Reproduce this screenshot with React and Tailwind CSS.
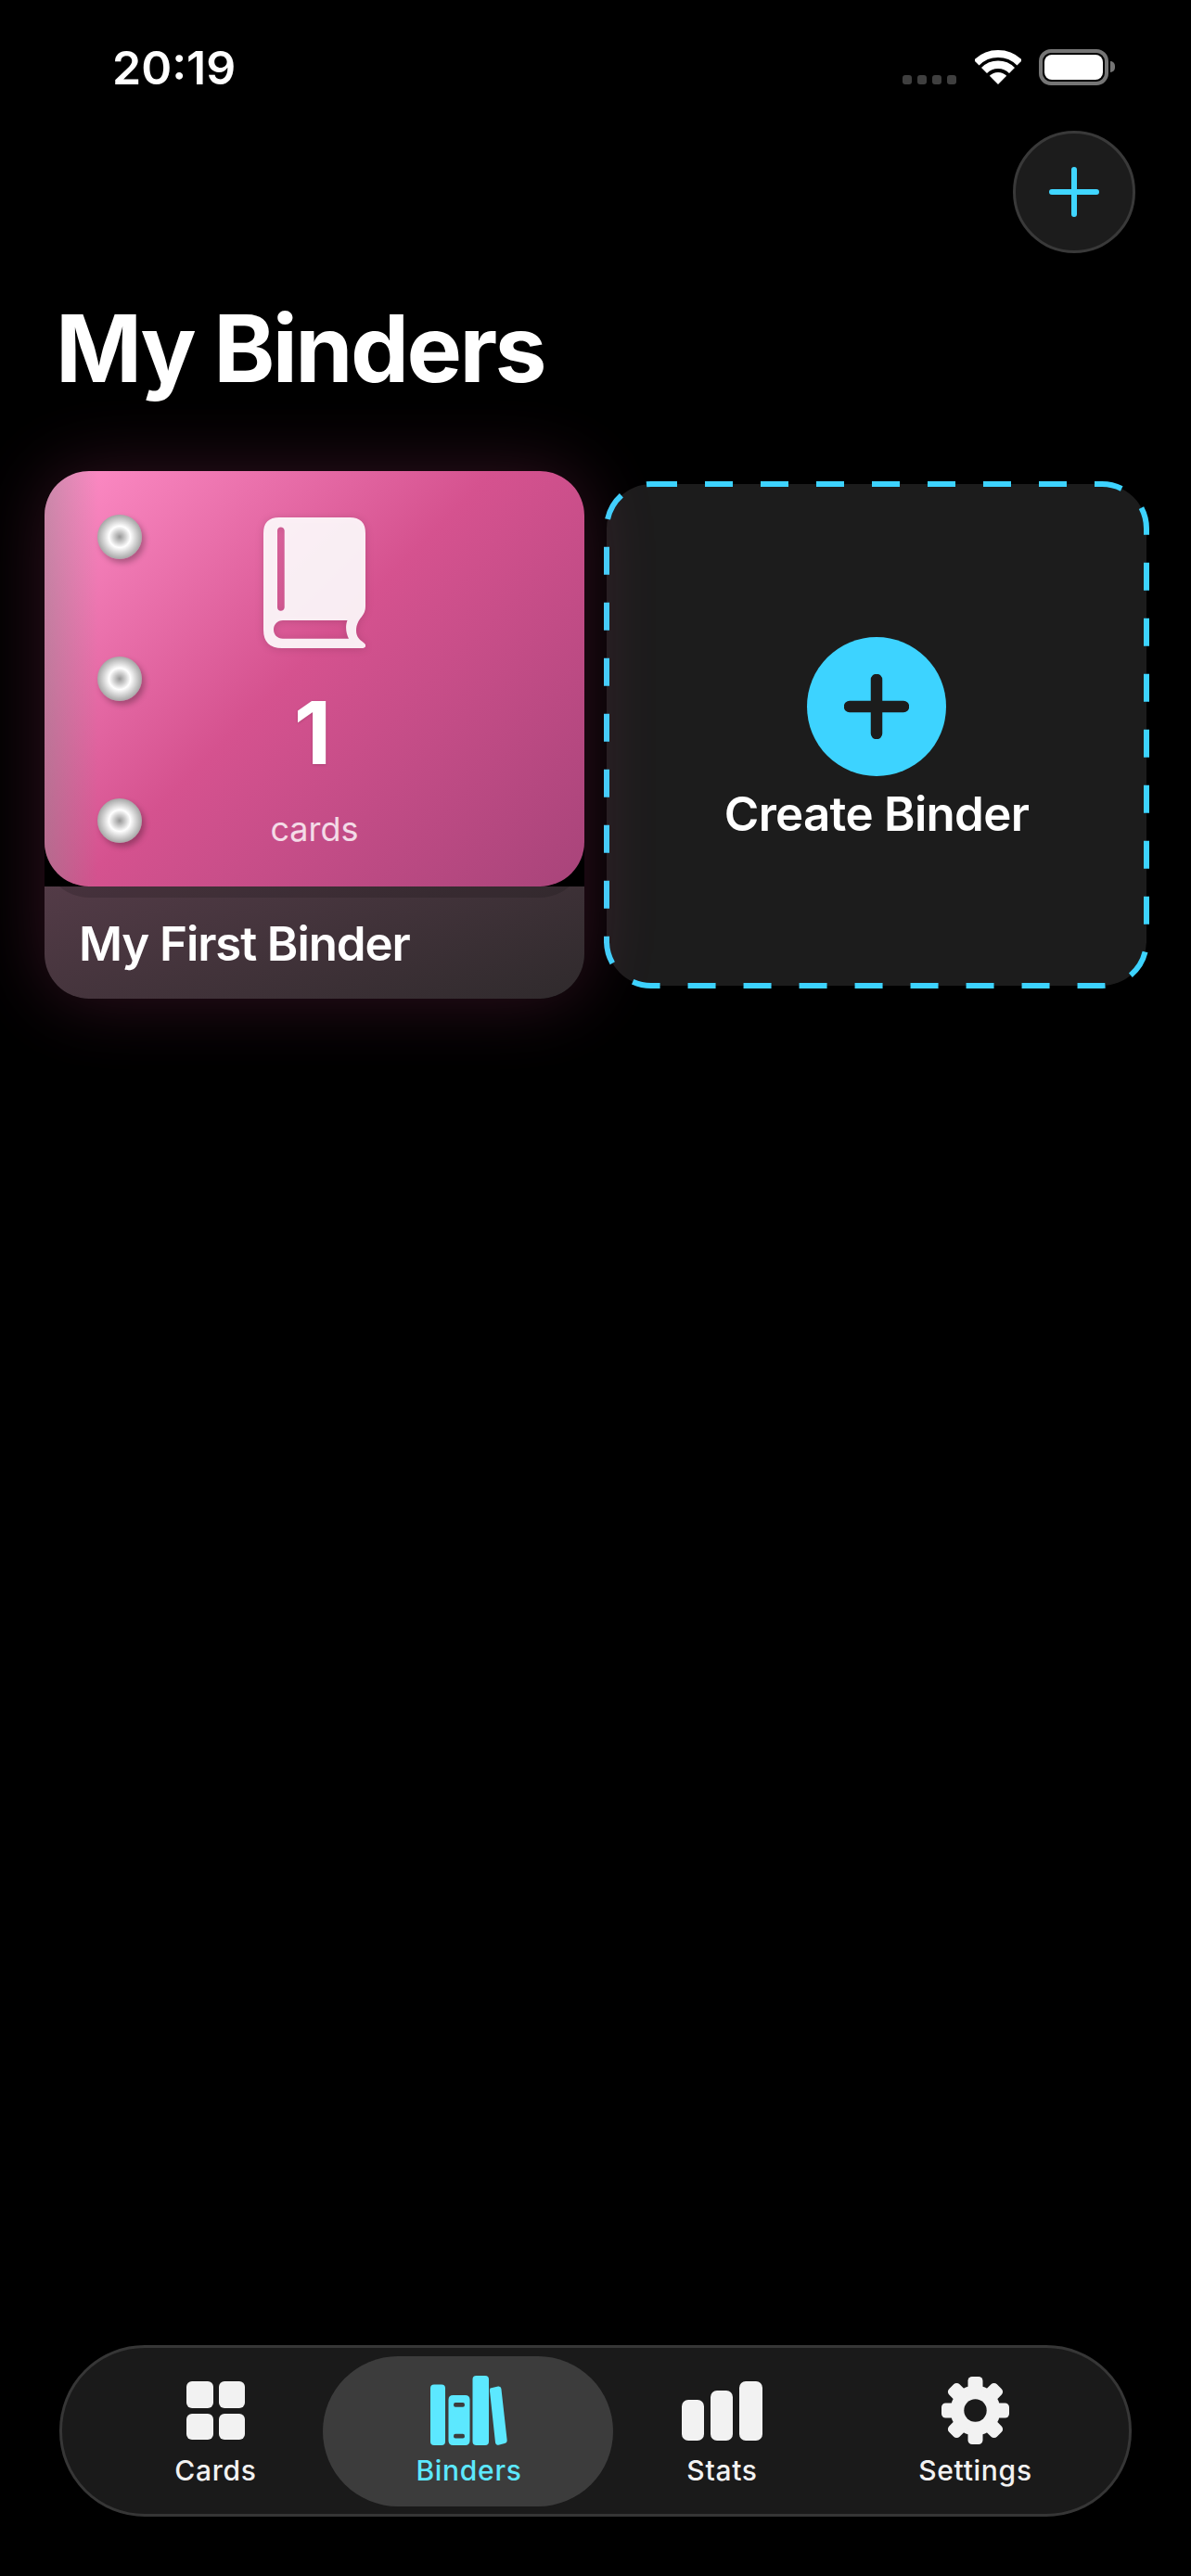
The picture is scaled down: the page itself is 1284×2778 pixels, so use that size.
import React from 'react';

const FONT = 'font-["Inter","Noto_Sans",sans-serif]';

const WifiIcon = () => (
  <svg width="50" height="37" viewBox="0 0 50 37" fill="none">
    <path d="M25 37 L15.8 27.8 A13 13 0 0 1 34.2 27.8 Z" fill="#fff" />
    <path d="M10 22 A21.25 21.25 0 0 1 40 22" stroke="#fff" strokeWidth="8.5" />
    <path d="M1.7 13.7 A33 33 0 0 1 48.3 13.7" stroke="#fff" strokeWidth="8" />
  </svg>
);

const BookIcon = () => (
  <svg width="110" height="142" viewBox="0 0 110 142" className="drop-shadow-[0_1px_4px_rgba(0,0,0,0.15)]">
    <path
      fillRule="evenodd"
      fill="rgba(255,255,255,0.9)"
      d="M17 0 H93 Q110 0 110 17 V96 Q110 102 106 107 C102 112 100 116 100 122 C100 129 104 132 108 135 C112 138 110 141 106 141 H20 Q0 141 0 121 V17 Q0 0 17 0 Z
         M18.7 10.5 C16.6 10.5 15 12.1 15 14.2 V97 C15 99.1 16.6 100.7 18.7 100.7 C20.8 100.7 22.7 99.1 22.7 97 V14.2 C22.7 12.1 20.8 10.5 18.7 10.5 Z
         M21 111 C15 111 11 115.5 11 121 C11 126.5 15 130.7 21 130.7 H92 C89 125 88 117 90.5 111 Z"
    />
  </svg>
);

const GridIcon = () => (
  <div className="grid grid-cols-2 gap-x-[6px] gap-y-[6px] w-[63px]">
    <div className="h-[28.5px] rounded-[6px] bg-[#f2f2f2]" />
    <div className="h-[28.5px] rounded-[6px] bg-[#f2f2f2]" />
    <div className="h-[28.5px] rounded-[6px] bg-[#f2f2f2]" />
    <div className="h-[28.5px] rounded-[6px] bg-[#f2f2f2]" />
  </div>
);

const BooksIcon = () => (
  <svg width="83" height="75" viewBox="0 0 83 75" fill="#5ce8ff">
    <rect x="0" y="9.5" width="16" height="65.5" rx="4" />
    <path
      fillRule="evenodd"
      d="M24.5 21 H37.5 Q42.5 21 42.5 26 V70 Q42.5 75 37.5 75 H24.5 Q19.5 75 19.5 70 V26 Q19.5 21 24.5 21 Z
         M27 29 Q25 29 25 31.4 Q25 33.8 27 33.8 H35 Q37 33.8 37 31.4 Q37 29 35 29 Z
         M27 62.8 Q25 62.8 25 65.2 Q25 67.6 27 67.6 H35 Q37 67.6 37 65.2 Q37 62.8 35 62.8 Z"
    />
    <rect x="45.5" y="0" width="17.5" height="75" rx="4" />
    <path d="M64.5 13.5 L73 11.5 Q76 11 76.4 14 L82.6 69 Q83 72.5 80 73 L73.5 74.8 Q70.5 75 70 72 L64 16.5 Q64 14 64.5 13.5 Z" />
  </svg>
);

const StatsIcon = () => (
  <div className="flex items-end gap-[7px] h-[64px]">
    <div className="w-[24px] h-[44px] rounded-[7px] bg-[#f2f2f2]" />
    <div className="w-[24px] h-[54px] rounded-[7px] bg-[#f2f2f2]" />
    <div className="w-[25px] h-[64px] rounded-[7px] bg-[#f2f2f2]" />
  </div>
);

const GearIcon = () => (
  <svg width="73" height="73" viewBox="0 0 73 73">
    <circle cx="36.5" cy="36.5" r="27" fill="#f2f2f2" />
    {[0, 45, 90, 135, 180, 225, 270, 315].map((deg) => (
      <rect
        key={deg}
        x="28.5"
        y="0"
        width="16"
        height="18"
        rx="4.5"
        fill="#f2f2f2"
        transform={`rotate(${deg} 36.5 36.5)`}
      />
    ))}
    <circle cx="36.5" cy="36.5" r="12.2" fill="#1a1a1a" />
  </svg>
);

const navItems = [
  { name: 'Cards', icon: <GridIcon /> },
  { name: 'Binders', icon: <BooksIcon />, active: true },
  { name: 'Stats', icon: <StatsIcon /> },
  { name: 'Settings', icon: <GearIcon /> },
];

const Ring = () => (
  <div className="w-[48px] h-[48px] rounded-full bg-[radial-gradient(circle_closest-side,#969696_0%,#ffffff_48%,#a6a6a6_100%)] shadow-[3px_4px_6px_rgba(0,0,0,0.28)]" />
);

export default function App() {
  return (
    <div className={`${FONT} relative flex flex-col w-[1284px] h-[2778px] bg-black text-white overflow-hidden`}>
      {/* Status bar */}
      <div className="flex justify-between h-[141px] pl-[121px] pr-[82px] pt-[43px]">
        <span className="text-[50px] leading-[60px] font-semibold tracking-[0px]">20:19</span>
        <div className="flex items-start pt-[10px]">
          <div className="flex gap-[6px] mt-[28px] mr-[20px]">
            <div className="w-[10px] h-[10px] rounded-[3px] bg-[#3f3f3f]" />
            <div className="w-[10px] h-[10px] rounded-[3px] bg-[#3f3f3f]" />
            <div className="w-[10px] h-[10px] rounded-[3px] bg-[#3f3f3f]" />
            <div className="w-[10px] h-[10px] rounded-[3px] bg-[#3f3f3f]" />
          </div>
          <div className="mt-[1px] mr-[19px]">
            <WifiIcon />
          </div>
          <div className="w-[75px] h-[39px] rounded-[13px] border-[4px] border-[#757575] p-[2px]">
            <div className="w-full h-full rounded-[8px] bg-white" />
          </div>
          <div className="w-[5px] h-[12px] mt-[13px] ml-[2px] rounded-r-[5px] bg-[#757575]" />
        </div>
      </div>

      {/* Add button */}
      <div className="flex justify-end pr-[60px]">
        <button className="flex items-center justify-center w-[132px] h-[132px] rounded-full bg-[#1c1c1c] border-[3px] border-[#393939]">
          <svg width="54" height="54" viewBox="0 0 54 54" fill="none" stroke="#40d6ff" strokeWidth="6" strokeLinecap="round">
            <path d="M27 3 V51 M3 27 H51" />
          </svg>
        </button>
      </div>

      <h1 className="mt-[43px] pl-[60px] text-[100px] leading-[120px] font-bold tracking-[-2.6px]">My Binders</h1>

      {/* Binders */}
      <div className="grid grid-cols-2 gap-[24px] items-center mt-[72px] px-[48px]">
        <div className="relative z-10 rounded-[48px] shadow-[0_0_80px_rgba(255,90,165,0.2)]">
          <div className="relative z-10 h-[448px] rounded-[48px] overflow-hidden bg-[linear-gradient(135deg,#ff8fc8_0%,#d5528f_47%,#a8447a_100%)] shadow-[0_12px_0_rgba(0,0,0,0.14)]">
            <div className="absolute inset-y-0 left-0 w-[58px] bg-[linear-gradient(to_right,rgba(130,130,130,0.42),rgba(130,130,130,0))]" />
            <div className="absolute left-[57px] top-[47px] flex flex-col gap-[105px]">
              <Ring />
              <Ring />
              <Ring />
            </div>
            <div className="relative flex flex-col items-center pt-[50px]">
              <BookIcon />
              <span className="mt-[35px] -ml-[4px] text-[94px] leading-[110px] font-bold [text-shadow:0_1px_3px_rgba(0,0,0,0.15)]">1</span>
              <span className="mt-[27px] text-[36px] leading-[44px] text-white/80">cards</span>
            </div>
          </div>
          <div className="flex items-center h-[121px] pl-[37px] pt-[3px] rounded-b-[48px] bg-[linear-gradient(160deg,#533b47_0%,#2f2a2c_100%)]">
            <span className="text-[51px] leading-[60px] font-semibold tracking-[-1.1px]">My First Binder</span>
          </div>
        </div>

        <div className="relative flex flex-col items-center h-[541px] rounded-[48px] bg-[#1c1c1c]">
          <svg className="absolute inset-0" width="582" height="541" fill="none" style={{ overflow: 'visible' }}>
            <path
              d="M48 0 H534 A48 48 0 0 1 582 48 V493 A48 48 0 0 1 534 541 H48 A48 48 0 0 1 0 493 V48 A48 48 0 0 1 48 0 Z"
              stroke="#3dd3ff"
              strokeWidth="6"
              strokeDasharray="30 30"
              strokeDashoffset="2"
            />
          </svg>
          <div className="flex items-center justify-center w-[150px] h-[150px] mt-[165px] rounded-full bg-[#3dd3ff]">
            <svg width="70" height="70" viewBox="0 0 70 70" fill="none" stroke="#1c1c1c" strokeWidth="12.5" strokeLinecap="round">
              <path d="M35 6 V64 M6 35 H64" />
            </svg>
          </div>
          <span className="mt-[10px] text-[51px] leading-[62px] font-semibold tracking-[-0.7px]">Create Binder</span>
        </div>
      </div>

      <div className="flex-1" />

      {/* Tab bar */}
      <nav className="grid grid-cols-4 h-[185px] mx-[64px] mb-[64px] px-[29px] rounded-[92px] bg-[#1a1a1a] border-[3px] border-[#363636]">
        {navItems.map((item) => (
          <div key={item.name} className="relative flex flex-col items-center pt-[30px]">
            {item.active && (
              <div className="absolute top-[9px] -left-[21px] -right-[19px] h-[162px] rounded-[81px] bg-[#3c3c3c]" />
            )}
            <div className="relative flex items-center justify-center h-[75px]">{item.icon}</div>
            <span
              className={`relative mt-[7px] text-[30px] leading-[40px] font-medium tracking-[0.7px] ${
                item.active ? 'text-[#5ce8ff]' : 'text-[#f2f2f2]'
              }`}
            >
              {item.name}
            </span>
          </div>
        ))}
      </nav>
    </div>
  );
}
